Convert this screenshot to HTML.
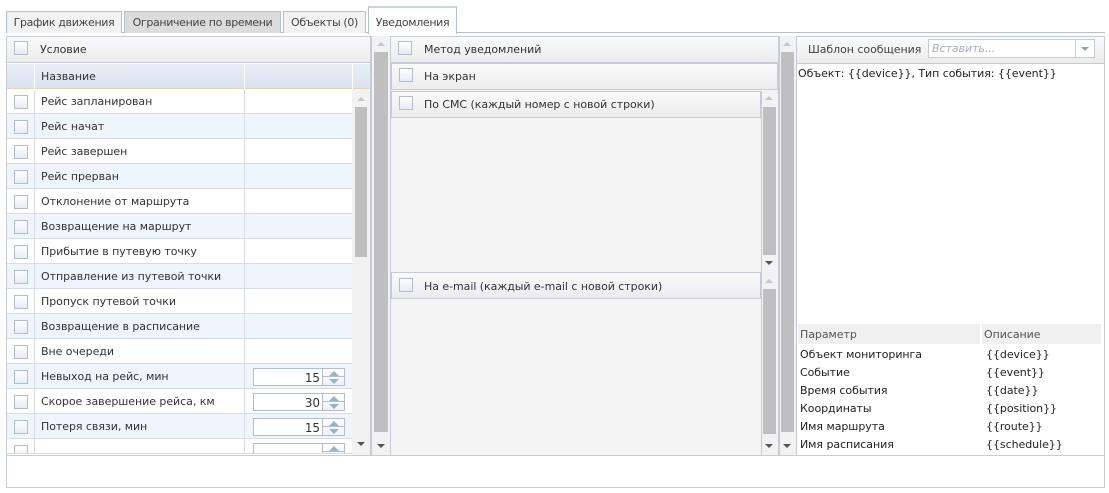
<!DOCTYPE html><html><head><meta charset="utf-8"><style>
*{box-sizing:border-box}body{margin:0;width:1109px;height:493px;background:#fff;font-family:"DejaVu Sans",Verdana,sans-serif;font-size:11px;color:#333;position:relative;overflow:hidden;letter-spacing:-0.05px}
.a{position:absolute;white-space:nowrap}
.tab{position:absolute;top:11px;height:22px;border:1px solid #b8bfcc;border-bottom:none;background:#f2f2f2;padding:4px 0;text-align:center;color:#444;font-size:11px;white-space:nowrap;letter-spacing:-0.35px;overflow:hidden}
.cb{position:absolute;width:14px;height:14px;border:1px solid #b5bccb;background:linear-gradient(#fff,#e6ecf4)}
.hdr{position:absolute;background:linear-gradient(#fafafa,#ececec);border:1px solid #c6cbd4}
.sb{position:absolute;background:#f2f2f2}
.th{background:#bfbfbf;position:absolute}
.up,.dn{position:absolute;width:0;height:0;border-left:4px solid transparent;border-right:4px solid transparent}
.up{border-bottom:4px solid #c6c6c6}.dn{border-top:4px solid #555}
.row{position:absolute;left:7px;width:345px;height:25px;border-bottom:1px solid #d8dde5}
.row span{position:absolute;left:34px;top:6px;white-space:nowrap}
.row .v{position:absolute;left:237px;top:0;width:1px;height:25px;background:#d8dde5}
.row .c{position:absolute;left:27px;top:0;width:1px;height:25px;background:#d8dde5}
.sp{position:absolute;left:246px;top:4px;width:92px;height:18px;border:1px solid #b5bccb;background:#fff;text-align:right;padding:2px 24px 0 0;font-size:12px}
.sp i{position:absolute;right:0;top:0;width:22px;height:16px;border-left:1px solid #b5bccb;background:linear-gradient(#fff,#eef2f7)}
.sp i:before{content:"";position:absolute;left:6px;top:2px;border-left:5px solid transparent;border-right:5px solid transparent;border-bottom:5px solid #9cb0d0}
.sp i:after{content:"";position:absolute;left:6px;top:10px;border-left:5px solid transparent;border-right:5px solid transparent;border-top:5px solid #9cb0d0}
.sp b{position:absolute;right:0;top:7px;width:22px;height:1px;background:#b5bccb}
.pr td{padding:0 4px;height:18px;white-space:nowrap}
</style></head><body>
<div class="a" style="left:6px;top:32px;width:1099px;height:1px;background:#b8bfcc"></div>
<div class="tab" style="left:6px;width:116px">График движения</div>
<div class="tab" style="left:124px;width:157px;background:#dcdcdc">Ограничение по времени</div>
<div class="tab" style="left:283px;width:83px">Объекты (0)</div>
<div class="tab" style="left:368px;top:6px;height:28px;width:89px;background:#fff;border-top:2px solid #c8d4e6;padding-top:8px">Уведомления</div>

<div class="a" style="left:6px;top:36px;width:365px;height:420px;border:1px solid #c6cbd4"></div>
<div class="hdr" style="left:6px;top:36px;width:365px;height:27px"></div>
<div class="cb" style="left:14px;top:41px"></div><div class="a" style="left:40px;top:43px">Условие</div>
<div class="a" style="left:7px;top:64px;width:363px;height:25px;background:linear-gradient(#e8eef6,#d9e3ef);border-bottom:1px solid #e6d3b0"></div>
<div class="a" style="left:34px;top:64px;width:1px;height:25px;background:#fff"></div>
<div class="a" style="left:244px;top:64px;width:1px;height:25px;background:#fff"></div>
<div class="a" style="left:352px;top:64px;width:1px;height:25px;background:#fff"></div>
<div class="a" style="left:41px;top:70px;color:#333">Название</div>
<div id="rows"></div>
<div class="sb" style="left:352px;top:89px;width:18px;height:366px"></div>
<div class="up" style="left:357px;top:97px"></div><div class="th" style="left:355px;top:107px;width:12px;height:150px"></div><div class="dn" style="left:357px;top:442px"></div>
<div class="sb" style="left:371px;top:36px;width:19px;height:420px;border-left:1px solid #c6cbd4"></div>
<div class="up" style="left:377px;top:42px"></div><div class="th" style="left:374px;top:52px;width:14px;height:380px"></div><div class="dn" style="left:377px;top:444px"></div>

<div class="a" style="left:390px;top:36px;width:389px;height:420px;border:1px solid #c6cbd4;background:#f4f4f4"></div>
<div class="hdr" style="left:390px;top:36px;width:389px;height:27px"></div>
<div class="cb" style="left:398px;top:41px"></div><div class="a" style="left:424px;top:43px">Метод уведомлений</div>
<div class="hdr" style="left:391px;top:63px;width:387px;height:27px"></div>
<div class="cb" style="left:399px;top:68px"></div><div class="a" style="left:424px;top:70px">На экран</div>
<div class="hdr" style="left:391px;top:91px;width:370px;height:27px"></div>
<div class="cb" style="left:399px;top:96px"></div><div class="a" style="left:424px;top:98px">По СМС (каждый номер с новой строки)</div>
<div class="hdr" style="left:391px;top:272px;width:370px;height:27px"></div>
<div class="cb" style="left:399px;top:278px"></div><div class="a" style="left:424px;top:280px">На e-mail (каждый e-mail с новой строки)</div>
<div class="sb" style="left:761px;top:91px;width:17px;height:181px;border-left:1px solid #c6cbd4"></div>
<div class="up" style="left:765px;top:96px"></div><div class="th" style="left:763px;top:107px;width:13px;height:148px"></div><div class="dn" style="left:765px;top:261px"></div>
<div class="sb" style="left:761px;top:272px;width:17px;height:183px;border-left:1px solid #c6cbd4"></div>
<div class="up" style="left:765px;top:279px"></div><div class="th" style="left:763px;top:289px;width:13px;height:145px"></div><div class="dn" style="left:765px;top:444px"></div>
<div class="sb" style="left:779px;top:36px;width:17px;height:420px;border-left:1px solid #c6cbd4"></div>
<div class="up" style="left:783px;top:42px"></div><div class="th" style="left:781px;top:52px;width:13px;height:380px"></div><div class="dn" style="left:783px;top:444px"></div>

<div class="a" style="left:796px;top:36px;width:309px;height:420px;border:1px solid #c6cbd4"></div>
<div class="hdr" style="left:796px;top:36px;width:309px;height:28px;border-bottom:1px solid #c6cbd4"></div>
<div class="a" style="left:808px;top:43px;color:#444">Шаблон сообщения</div>
<div class="a" style="left:928px;top:39px;width:167px;height:19px;border:1px solid #c6cbd4;background:#fff;color:#aab;font-style:italic;padding:2px 3px">Вставить...</div>
<div class="a" style="left:1075px;top:40px;width:1px;height:17px;background:#c6cbd4"></div>
<div class="a" style="left:1081px;top:47px;border-left:4px solid transparent;border-right:4px solid transparent;border-top:4px solid #8a9ec0"></div>
<div class="a" style="left:798px;top:67px;color:#222">Объект: {{device}}, Тип события: {{event}}</div>
<div class="a" style="left:798px;top:324px;width:182px;height:20px;background:#f0f0f0;color:#555;padding:4px 2px">Параметр</div>
<div class="a" style="left:982px;top:324px;width:119px;height:20px;background:#f0f0f0;color:#555;padding:4px 2px">Описание</div>
<table class="a pr" style="left:796px;top:345px;border-collapse:collapse;color:#222;font-size:11px">
<tr><td style="width:186px">Объект мониторинга</td><td>{{device}}</td></tr>
<tr><td>Событие</td><td>{{event}}</td></tr>
<tr><td>Время события</td><td>{{date}}</td></tr>
<tr><td>Координаты</td><td>{{position}}</td></tr>
<tr><td>Имя маршрута</td><td>{{route}}</td></tr>
<tr><td>Имя расписания</td><td>{{schedule}}</td></tr></table>

<div class="a" style="left:6px;top:455px;width:1099px;height:33px;border:1px solid #c6cbd4;background:#fff"></div>
<script>
var n=["Рейс запланирован","Рейс начат","Рейс завершен","Рейс прерван","Отклонение от маршрута","Возвращение на маршрут","Прибытие в путевую точку","Отправление из путевой точки","Пропуск путевой точки","Возвращение в расписание","Вне очереди","Невыход на рейс, мин","Скорое завершение рейса, км","Потеря связи, мин",""];
var sp={11:15,12:30,13:15,14:""};var h="";
n.forEach(function(t,i){var y=89+i*25;if(y>440)y=440;var hh=i==14?15:25;
h+='<div class="row" style="top:'+y+'px;height:'+hh+'px;overflow:hidden;background:'+(i%2?'#eef5fd':'#fff')+'"><div class="c"></div><div class="v"></div><div class="cb" style="left:7px;top:6px"></div><span>'+t+'</span>'+(i in sp?'<div class="sp">'+sp[i]+'<i></i><b></b></div>':'')+'</div>';});
document.getElementById("rows").innerHTML=h;
</script>
</body></html>
